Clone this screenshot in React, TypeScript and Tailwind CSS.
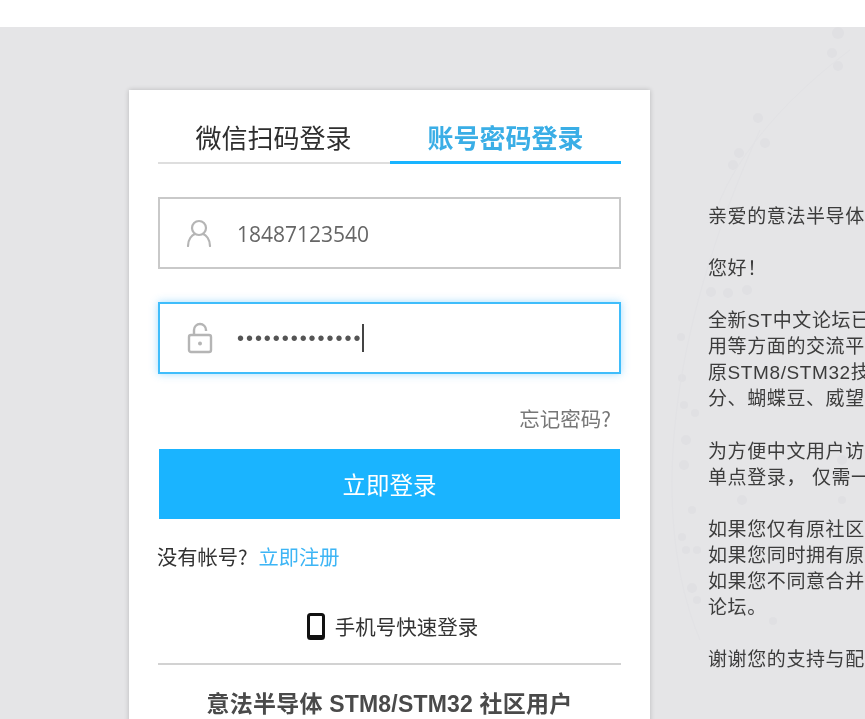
import React from "react";

const CJK = "font-['Noto_Sans_CJK_SC','Noto_Sans',sans-serif]";

const dots: [number, number, number][] = [
  [758, 118, 5], [765, 143, 5], [739, 153, 5], [733, 165, 5], [832, 53, 5], [838, 66, 5], [838, 33, 6],
  [711, 292, 5], [728, 293, 5], [747, 290, 5], [681, 337, 4], [682, 378, 4], [684, 405, 4], [695, 413, 4],
  [686, 440, 5], [684, 465, 5], [742, 500, 5], [692, 510, 4], [682, 537, 4], [686, 550, 4], [697, 550, 4],
  [692, 588, 5], [697, 600, 4], [773, 621, 4], [842, 460, 5], [842, 500, 4],
];

function Field({ icon, children, focused }: { icon: React.ReactNode; children: React.ReactNode; focused?: boolean }) {
  return (
    <div
      className={
        focused
          ? "flex h-[72px] items-center border-2 border-[#3fbdfb] bg-white shadow-[0_0_8px_rgba(60,180,250,0.45)]"
          : "flex h-[72px] items-center border-2 border-[#c9c9c9] bg-white"
      }
    >
      <div className="flex w-[77px] shrink-0 justify-center pl-[1px]">{icon}</div>
      {children}
    </div>
  );
}

export default function App() {
  return (
    <div className={`flex h-[719px] w-[865px] flex-col overflow-hidden bg-white blur-[0.35px] ${CJK}`}>
      <div className="h-[27px] shrink-0 bg-white" />
      <div className="relative flex min-h-0 flex-1 items-start overflow-hidden bg-[#e5e5e7] pl-[129px] pt-[63px]">
        <svg className="absolute left-0 top-0 h-[692px] w-[865px]" viewBox="0 27 865 692" fill="none">
          {dots.map(([x, y, r], i) => (
            <circle key={i} cx={x} cy={y} r={r} fill="#e0e0e3" />
          ))}
          <path d="M718 205C740 150 790 95 850 50" stroke="#e2e2e5" />
          <path d="M700 640C650 520 665 340 760 130" stroke="#e2e2e5" />
        </svg>

        <div className="relative z-10 h-[640px] w-[521px] shrink-0 bg-white px-[29px] pt-[24px] shadow-[0_0_5px_rgba(0,0,0,0.2)]">
          <div className="flex h-[50px] border-b-2 border-[#dedede]">
            <div className="flex h-[50px] w-[232px] justify-center pr-[1px] pt-[2px] text-[26px] leading-[42px] text-[#2e2e2e]">
              微信扫码登录
            </div>
            <div className="flex h-[50px] w-[231px] justify-center border-b-[3px] border-[#18b4ff] pt-[2px] text-[26px] font-semibold leading-[42px] text-[#3aaee6]">
              账号密码登录
            </div>
          </div>

          <div className="mt-[33px] flex flex-col gap-[33px]">
            <Field
              icon={
                <svg width="26" height="28" viewBox="0 0 26 28" fill="none" stroke="#b5b5b5" strokeWidth="2.2">
                  <circle cx="13" cy="9" r="7" />
                  <path d="M2 27c0-7 4-11 7-12M24 27c0-7-4-11-7-12" strokeLinecap="round" />
                </svg>
              }
            >
              <span className="translate-y-[1px] font-['Open_Sans',sans-serif] text-[21px] leading-none text-[#666666]">18487123540</span>
            </Field>
            <Field
              focused
              icon={
                <svg width="26" height="32" viewBox="0 0 26 32" fill="none" stroke="#b5b5b5" strokeWidth="2.4" className="translate-x-[1px]">
                  <rect x="2" y="13" width="22" height="17" rx="2" />
                  <path d="M7 13V8a6 6 0 0 1 12 0v1" />
                  <circle cx="13" cy="21.5" r="2" fill="#b5b5b5" stroke="none" />
                </svg>
              }
            >
              <div className="flex items-center">
                <span className="w-[125px] whitespace-nowrap font-['Liberation_Sans',sans-serif] text-[20px] leading-none tracking-[1.95px] text-[#555555]">
                  ••••••••••••••
                </span>
                <span className="h-[28px] w-[1.5px] bg-[#444444]" />
              </div>
            </Field>
          </div>

          <div className="mt-[30px] pr-[10px] text-right text-[20.5px] leading-[28px] text-[#777777]">忘记密码?</div>

          <div className="mx-[1px] mt-[17px] flex h-[70px] items-center justify-center bg-[#1ab4ff] text-[23.5px] text-white">
            <span className="translate-y-[1px]">立即登录</span>
          </div>

          <div className="-ml-[1px] mt-[24px] flex h-[28px] items-center text-[20.25px] leading-[28px] text-[#333333]">
            <span>没有帐号?</span>
            <span className="ml-[11px] text-[#3db5f5]">立即注册</span>
          </div>

          <div className="mt-[41px] flex h-[28px] items-center justify-center pl-[6px] text-[20.5px] leading-[28px] text-[#333333]">
            <svg width="18" height="27" viewBox="0 0 18 27" fill="none" className="mr-[10px]">
              <rect x="1.5" y="1.5" width="15" height="24" rx="2" stroke="#111111" strokeWidth="3" />
              <rect x="2" y="22" width="14" height="3.5" fill="#111111" />
            </svg>
            手机号快速登录
          </div>

          <div className="mt-[23px] h-[2px] bg-[#d2d2d2]" />

          <div className="mt-[24px] text-center font-['Liberation_Sans','Noto_Sans_CJK_SC',sans-serif] text-[23px] font-bold leading-[30px] tracking-[0.2px] text-[#4a4a4a]">
            意法半导体 STM8/STM32 社区用户
          </div>
        </div>

        <div className="relative z-10 ml-[58px] mt-[114px] w-[400px] shrink-0 whitespace-nowrap font-['Liberation_Sans','Noto_Sans_CJK_SC',sans-serif] text-[19px] leading-[26.1px] tracking-[0.6px] text-[#3c3c3c]">
          <p>亲爱的意法半导体</p>
          <p className="mt-[26px]">您好！</p>
          <p className="mt-[26px]">全新ST中文论坛已</p>
          <p>用等方面的交流平</p>
          <p>原STM8/STM32技</p>
          <p>分、蝴蝶豆、威望</p>
          <p className="mt-[26px]">为方便中文用户访</p>
          <p>单点登录， 仅需一</p>
          <p className="mt-[26px]">如果您仅有原社区</p>
          <p>如果您同时拥有原</p>
          <p>如果您不同意合并</p>
          <p>论坛。</p>
          <p className="mt-[26px]">谢谢您的支持与配</p>
        </div>
      </div>
    </div>
  );
}
